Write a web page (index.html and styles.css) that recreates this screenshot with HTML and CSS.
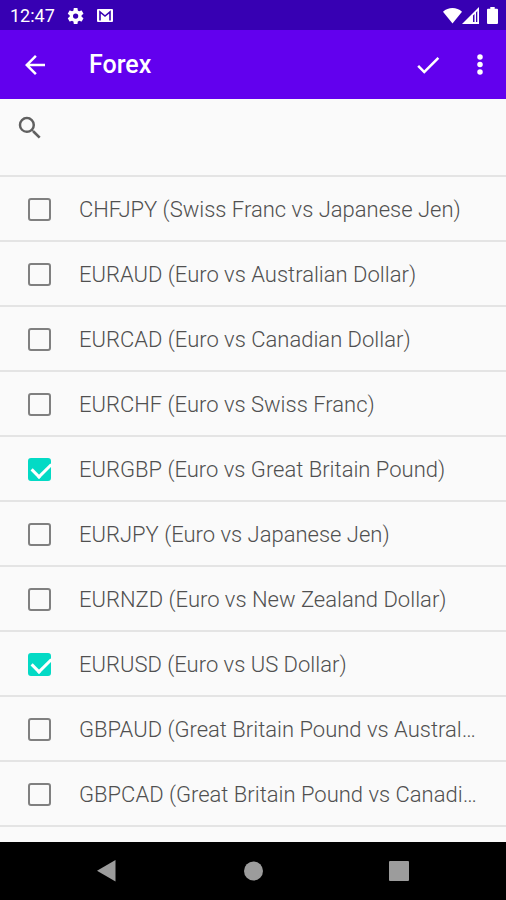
FILE: index.html
```html
<!DOCTYPE html>
<html lang="en">
<head>
  <meta charset="UTF-8">
  <meta name="viewport" content="width=device-width, initial-scale=1.0">
  <title>Forex</title>
  <link rel="stylesheet" href="styles.css">
</head>
<body>
  <!-- Status bar -->
  <div class="status-bar">
    <span class="clock">12:47</span>
    <svg class="status-icon" viewBox="0 0 24 24" width="18" height="18"><path fill="#fff" fill-rule="evenodd" d="M19.4 13c0-.3.1-.6.1-1s0-.7-.1-1l2.300-1.700c.2-.2.300-.4.100-.700l-2.200-3.800c-.1-.2-.4-.3-.6-.2l-2.700 1.100c-.600-.4-1.200-.8-1.900-1.100L14 1.800c0-.2-.2-.4-.5-.4h-4c-.3 0-.5.200-.5.400l-.4 2.800c-.7.300-1.300.7-1.900 1.100L4 4.600c-.2-.1-.5 0-.6.200L1.200 8.600c-.1.300-.1.500.1.700L3.600 11c0 .3-.1.700-.1 1s0 .7.100 1l-2.300 1.700c-.2.200-.2.400-.1.700l2.200 3.800c.1.200.4.300.6.200l2.700-1.100c.6.4 1.200.8 1.900 1.100l.4 2.800c0 .3.200.4.500.4h4c.3 0 .5-.1.500-.4l.4-2.800c.7-.3 1.300-.7 1.900-1.100l2.700 1.100c.2.100.5 0 .6-.2l2.200-3.800c.1-.3.100-.5-.1-.7zM11.500 15.500a3.500 3.500 0 1 1 0-7 3.500 3.500 0 0 1 0 7z"/></svg>
    <svg class="status-icon" viewBox="0 0 16 13" width="16" height="13"><rect width="16" height="13" rx="1" fill="#fff"/><path d="M3 11.500V3l5 4 5-4v8.500" fill="none" stroke="#3700b3" stroke-width="1.600"/></svg>
    <div class="status-right">
      <svg viewBox="0 0 20 17" width="19" height="17"><path fill="#fff" d="M0 4.500C5.500-.7 14.500-.7 20 4.500L10 17z"/></svg>
      <svg viewBox="0 0 17 17" width="17" height="17"><path fill="#fff" fill-rule="evenodd" d="M0 17 17 0v17zM11 8.500V15h1.500V7zM14 5.500V15h1.300V4z"/></svg>
      <svg class="battery" viewBox="0 0 11 17" width="11" height="17"><path fill="#fff" d="M3.300 0h4.400v1.700H10a1 1 0 0 1 1 1V16a1 1 0 0 1-1 1H1a1 1 0 0 1-1-1V2.700a1 1 0 0 1 1-1h2.300z"/></svg>
    </div>
  </div>

  <!-- Toolbar -->
  <header class="toolbar">
    <button type="button" class="icon-button" aria-label="Back">
      <svg viewBox="0 0 24 24" width="30" height="30"><path fill="#fff" d="M20 11H7.830l5.590-5.590L12 4l-8 8 8 8 1.410-1.410L7.830 13H20z"/></svg>
    </button>
    <h1>Forex</h1>
    <button type="button" class="icon-button" aria-label="Save">
      <svg viewBox="0 0 24 24" width="30" height="30"><path fill="#fff" d="M9 16.170 4.830 12l-1.420 1.410L9 19 21 7l-1.410-1.410z"/></svg>
    </button>
    <button type="button" class="icon-button more" aria-label="More options">
      <svg viewBox="0 0 24 24" width="30" height="30"><g fill="#fff"><circle cx="12" cy="5.500" r="2.200"/><circle cx="12" cy="11.500" r="2.200"/><circle cx="12" cy="17.500" r="2.200"/></g></svg>
    </button>
  </header>

  <main>
    <div class="search">
      <label for="search" aria-label="Search">
        <svg viewBox="0 0 24 24" width="30" height="30"><path fill="#606060" d="M15.500 14h-.79l-.28-.27A6.471 6.471 0 0 0 16 9.500 6.500 6.500 0 1 0 9.500 16c1.610 0 3.090-.59 4.230-1.570l.27.28v.79l5 4.990L20.490 19zm-6 0C7.010 14 5 11.990 5 9.500S7.010 5 9.500 5 14 7.010 14 9.500 11.990 14 9.500 14z"/></svg>
      </label>
      <input type="text" id="search">
    </div>

    <!-- Currency pairs -->
    <ul class="pairs">
      <li><label><input type="checkbox"><span>CHFJPY (Swiss Franc vs Japanese Jen)</span></label></li>
      <li><label><input type="checkbox"><span>EURAUD (Euro vs Australian Dollar)</span></label></li>
      <li><label><input type="checkbox"><span>EURCAD (Euro vs Canadian Dollar)</span></label></li>
      <li><label><input type="checkbox"><span>EURCHF (Euro vs Swiss Franc)</span></label></li>
      <li><label><input type="checkbox" checked><span>EURGBP (Euro vs Great Britain Pound)</span></label></li>
      <li><label><input type="checkbox"><span>EURJPY (Euro vs Japanese Jen)</span></label></li>
      <li><label><input type="checkbox"><span>EURNZD (Euro vs New Zealand Dollar)</span></label></li>
      <li><label><input type="checkbox" checked><span>EURUSD (Euro vs US Dollar)</span></label></li>
      <li><label><input type="checkbox"><span>GBPAUD (Great Britain Pound vs Australian Dollar)</span></label></li>
      <li><label><input type="checkbox"><span>GBPCAD (Great Britain Pound vs Canadian Dollar)</span></label></li>
    </ul>
  </main>

  <!-- System navigation -->
  <nav class="nav-bar">
    <button type="button" aria-label="Back"><svg viewBox="0 0 20 22" width="20" height="22"><path fill="#9c9c9c" d="M18.500 0v21.500L0 10.750z"/></svg></button>
    <button type="button" aria-label="Home"><svg viewBox="0 0 20 20" width="20" height="20"><circle cx="10.500" cy="10" r="9.500" fill="#9c9c9c"/></svg></button>
    <button type="button" aria-label="Recent apps"><svg viewBox="0 0 20 20" width="20" height="20"><rect width="20" height="20" rx="1" fill="#9c9c9c"/></svg></button>
  </nav>
</body>
</html>
```
FILE: styles.css
```css
* {
  box-sizing: border-box;
}

body {
  margin: 0;
  height: 100vh;
  display: flex;
  flex-direction: column;
  font-family: Roboto, sans-serif;
  background-color: #fafafa;
}

button {
  display: flex;
  align-items: center;
  justify-content: center;
  padding: 0;
  border: none;
  background: none;
  cursor: pointer;
}

svg {
  display: block;
}

.status-bar {
  flex: none;
  display: flex;
  align-items: center;
  height: 30px;
  padding: 1px 8px 0 10px;
  background-color: #3700b3;
  color: #fff;
}

.clock {
  font-size: 18px;
  line-height: 28px;
}

.status-icon {
  margin-left: 12px;
}

.status-right {
  display: flex;
  margin-left: auto;
}

.battery {
  margin-left: 8px;
}

.toolbar {
  flex: none;
  display: flex;
  align-items: center;
  height: 69px;
  padding: 1px 11px 0 20px;
  background-color: #6200ee;
  color: #fff;
}

.toolbar h1 {
  flex: 1;
  margin: 0;
  padding-left: 39px;
  font-size: 25px;
  font-weight: 500;
  line-height: 32px;
}

.icon-button {
  width: 30px;
  height: 48px;
}

.more {
  margin-left: 22px;
}

main {
  flex: 1;
  min-height: 0;
  overflow: hidden;
}

.search {
  display: flex;
  align-items: flex-start;
  height: 78px;
  padding: 14px 16px 0 15px;
  border-bottom: 2px solid #e4e4e4;
}

.search input {
  flex: 1;
  height: 30px;
  padding: 0 8px;
  border: none;
  outline: none;
  background: transparent;
  font-family: inherit;
  font-size: 22px;
}

.pairs {
  margin: 0;
  padding: 0;
  list-style: none;
}

.pairs li {
  border-bottom: 2px solid #e4e4e4;
}

.pairs label {
  display: flex;
  align-items: center;
  height: 63px;
  padding: 2px 27px 0 28px;
  cursor: pointer;
}

.pairs span {
  flex: 1;
  min-width: 0;
  overflow: hidden;
  text-overflow: ellipsis;
  white-space: nowrap;
  font-size: 22px;
  font-weight: 300;
  line-height: 30px;
  color: #505050;
}

.pairs input {
  appearance: none;
  flex: none;
  position: relative;
  width: 23px;
  height: 23px;
  margin: 0 28px 0 0;
  border: 2px solid #808080;
  border-radius: 3px;
}

.pairs input:checked {
  border-color: #03dac5;
  background-color: #03dac5;
}

/* tick mark */
.pairs input:checked::after {
  content: "";
  position: absolute;
  left: 2px;
  top: 2px;
  width: 16px;
  height: 9px;
  border-left: 3px solid #fff;
  border-bottom: 3px solid #fff;
  transform: rotate(-45deg);
}

.nav-bar {
  flex: none;
  display: flex;
  justify-content: center;
  gap: 86px;
  height: 58px;
  background-color: #000;
}

.nav-bar button {
  width: 60px;
}
```
